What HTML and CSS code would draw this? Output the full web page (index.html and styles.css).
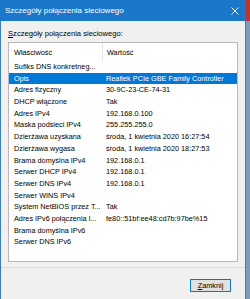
FILE: index.html
```html
<!DOCTYPE html>
<html lang="pl">
<head>
  <meta charset="UTF-8">
  <meta name="viewport" content="width=device-width, initial-scale=1.0">
  <title>Szczegóły połączenia sieciowego</title>
  <link rel="stylesheet" href="styles.css">
</head>
<body>
  <div class="window">
    <div class="titlebar">
      <span class="title">Szczegóły połączenia sieciowego</span>
      <svg class="close" width="8" height="8" viewBox="0 0 8 8">
        <path d="M0.5 0.5L7.5 7.5M7.5 0.5L0.5 7.5" stroke="#fff" stroke-width="1"/>
      </svg>
    </div>
    <div class="content">
      <div class="label"><u>S</u>zczegóły połączenia sieciowego:</div>
      <div class="list">
        <div class="list-head">
          <div class="col-name">Właściwość</div>
          <div class="col-value">Wartość</div>
        </div>
        <div class="row"><div class="col-name">Sufiks DNS konkretneg...</div><div class="col-value"></div></div>
        <div class="row selected"><div class="col-name">Opis</div><div class="col-value">Realtek PCIe GBE Family Controller</div></div>
        <div class="row"><div class="col-name">Adres fizyczny</div><div class="col-value">30-9C-23-CE-74-31</div></div>
        <div class="row"><div class="col-name">DHCP włączone</div><div class="col-value">Tak</div></div>
        <div class="row"><div class="col-name">Adres IPv4</div><div class="col-value">192.168.0.100</div></div>
        <div class="row"><div class="col-name">Maska podsieci IPv4</div><div class="col-value">255.255.255.0</div></div>
        <div class="row"><div class="col-name">Dzierżawa uzyskana</div><div class="col-value">środa, 1 kwietnia 2020 16:27:54</div></div>
        <div class="row"><div class="col-name">Dzierżawa wygasa</div><div class="col-value">środa, 1 kwietnia 2020 18:27:53</div></div>
        <div class="row"><div class="col-name">Brama domyślna IPv4</div><div class="col-value">192.168.0.1</div></div>
        <div class="row"><div class="col-name">Serwer DHCP IPv4</div><div class="col-value">192.168.0.1</div></div>
        <div class="row"><div class="col-name">Serwer DNS IPv4</div><div class="col-value">192.168.0.1</div></div>
        <div class="row"><div class="col-name">Serwer WINS IPv4</div><div class="col-value"></div></div>
        <div class="row"><div class="col-name">System NetBIOS przez T...</div><div class="col-value">Tak</div></div>
        <div class="row"><div class="col-name">Adres IPv6 połączenia l...</div><div class="col-value">fe80::51bf:ee48:cd7b:97be%15</div></div>
        <div class="row"><div class="col-name">Brama domyślna IPv6</div><div class="col-value"></div></div>
        <div class="row"><div class="col-name">Serwer DNS IPv6</div><div class="col-value"></div></div>
      </div>
    </div>
    <div class="footer">
      <button class="close-button"><u>Z</u>amknij</button>
    </div>
  </div>
</body>
</html>
```

FILE: styles.css
```css
body {
  margin: 0;
  height: 299px;
  background: linear-gradient(#b03a3a 0, #b03a3a 21px, #7d9cbc 21px);
  font-family: "Liberation Sans", Arial, sans-serif;
  color: #000;
  overflow: hidden;
}
.window {
  width: 244px;
  height: 299px;
  background: #f0f0f0;
  border-left: 1px solid #2f7fd0;
  border-right: 1px solid #2f7fd0;
  display: flex;
  flex-direction: column;
}
.titlebar {
  height: 21px;
  background: #1a77c9;
  color: #fff;
  display: flex;
  align-items: center;
  justify-content: space-between;
  padding: 0 6px 0 5px;
  margin: 0 -1px;
}
.title {
  font-size: 8px;
}
.close {
  margin-right: 1px;
}
.content {
  padding: 0 7px;
  display: flex;
  flex-direction: column;
}
.label {
  font-size: 7.6px;
  line-height: 10px;
  margin-top: 8px;
  margin-bottom: 3px;
}
.list {
  background: #fff;
  border: 1px solid #b9b9b9;
  height: 218px;
  font-size: 7.3px;
}
.list-head {
  display: flex;
  height: 18px;
  align-items: center;
}
.list-head .col-name {
  border-right: 1px solid #e5e5e5;
  height: 18px;
  line-height: 19px;
}
.row {
  display: flex;
  height: 11.7px;
  line-height: 11.7px;
  white-space: nowrap;
}
.col-name {
  width: 88px;
  padding-left: 5px;
  overflow: hidden;
}
.col-value {
  padding-left: 4px;
  line-height: 19px;
}
.row .col-value {
  padding-left: 4px;
  line-height: 11.7px;
}
.row.selected {
  background: #0078d7;
  color: #fff;
}
.footer {
  flex: 1;
  border-top: 1px solid #dcdcdc;
  display: flex;
  justify-content: flex-end;
  align-items: flex-start;
  padding: 11px 14px 0 0;
  margin-top: 5px;
}
.close-button {
  width: 41px;
  height: 13px;
  padding: 0;
  font-family: "Liberation Sans", Arial, sans-serif;
  font-size: 7.3px;
  background: #e1e1e1;
  border: 1px solid #0078d7;
  box-shadow: inset 0 0 0 1px #e1e1e1;
  color: #000;
}
```
